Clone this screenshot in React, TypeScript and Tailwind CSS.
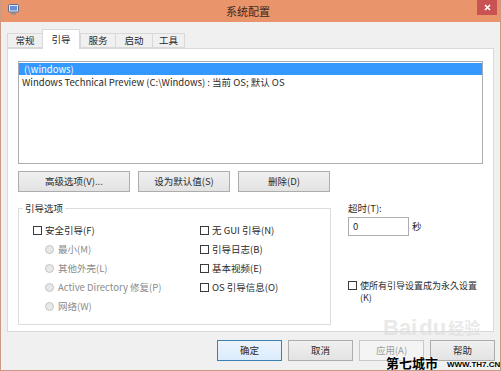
import type { ReactNode } from 'react'

const tabs = [
  { label: '常规', w: 'w-[35px]' },
  { label: '引导', w: 'w-[38px]', active: true },
  { label: '服务', w: 'w-[35px]' },
  { label: '启动', w: 'w-[37px]' },
  { label: '工具', w: 'w-[33px]' },
]

function CheckBox({ children }: { children: ReactNode }) {
  return (
    <div className="flex h-[19px] items-center gap-[3px]">
      <span className="h-[9px] w-[9px] shrink-0 border border-[#3a3a3a] bg-white" />
      <span>{children}</span>
    </div>
  )
}

function Radio({ children }: { children: ReactNode }) {
  return (
    <div className="flex h-[19px] items-center gap-[4px] pl-[12px] text-[#8a8a8a]">
      <span className="h-[9px] w-[9px] shrink-0 rounded-full border border-[#c4c4c4] bg-[#e8e8e8]" />
      <span>{children}</span>
    </div>
  )
}

function Btn({ children, w, variant }: { children: ReactNode; w: string; variant?: 'default' | 'disabled' }) {
  const look =
    variant === 'default'
      ? 'border-[#3c7fb1] bg-gradient-to-b from-[#ecf4fc] to-[#dcecfc]'
      : variant === 'disabled'
        ? 'border-[#c8c8c8] bg-[#f4f4f4] text-[#a0a0a0]'
        : 'border-[#acacac] bg-gradient-to-b from-[#f0f0f0] to-[#e3e3e3]'
  return (
    <div className={`flex h-[21px] ${w} items-center justify-center border ${look}`}>{children}</div>
  )
}

export default function App() {
  return (
    <div className="relative flex h-[371px] w-[501px] flex-col overflow-hidden border-x border-b border-[#c99b84] bg-[#f0f0f0] font-['Noto_Sans_CJK_SC',sans-serif] text-[9.5px] leading-[13px] text-[#2a2a2a]">
      {/* title bar */}
      <div className="flex h-[22px] shrink-0 items-start bg-[#e9946a]">
        <svg className="ml-[7px] mt-[4px]" width="11" height="11" viewBox="0 0 11 11">
          <rect x="0.5" y="0.5" width="10" height="7.5" rx="1" fill="#dfe6f0" stroke="#5f6f8a" />
          <rect x="2" y="2" width="7" height="4.5" fill="#6a8fd6" />
          <rect x="3" y="8.5" width="5" height="2" fill="#8a8fa0" />
        </svg>
        <div className="flex-1 pt-[4px] text-center text-[11px] leading-[14px] text-[#3b2a22]">系统配置</div>
        <div className="mr-[3px] flex h-[15px] w-[20px] items-center justify-center bg-[#c95352]">
          <svg width="7" height="7" viewBox="0 0 7 7">
            <path d="M1 1L6 6M6 1L1 6" stroke="#fff" strokeWidth="1.6" />
          </svg>
        </div>
      </div>

      {/* tabs */}
      <div className="ml-[6px] mt-[7px] flex items-end">
        {tabs.map((t) =>
          t.active ? (
            <div
              key={t.label}
              className={`relative z-10 -mb-px flex h-[20px] ${t.w} justify-center border border-b-0 border-[#d9d9d9] bg-white pt-[3px]`}
            >
              {t.label}
            </div>
          ) : (
            <div
              key={t.label}
              className={`flex h-[15px] ${t.w} items-center justify-center border border-r-0 border-[#d9d9d9] bg-[#f0f0f0] last:border-r`}
            >
              {t.label}
            </div>
          ),
        )}
      </div>

      {/* tab page */}
      <div className="ml-[6px] flex h-[284px] w-[487px] flex-col border border-[#d9d9d9] bg-white pl-[10px] pt-[12px]">
        <div className="h-[103px] w-[465px] border border-[#abadb3] bg-white pt-[1px]">
          <div className="h-[12px] bg-[#3399ff] pl-[5px] leading-[12px] text-white">(\windows)</div>
          <div className="h-[13px] pl-[3px] leading-[15px]">Windows Technical Preview (C:\Windows) : 当前 OS; 默认 OS</div>
        </div>

        <div className="mt-[7px] flex gap-[8px]">
          <Btn w="w-[112px]">高级选项(V)...</Btn>
          <Btn w="w-[92px]">设为默认值(S)</Btn>
          <Btn w="w-[92px]">删除(D)</Btn>
        </div>

        <div className="mt-[9px] flex">
          <div className="pt-[7px]">
            <div className="relative h-[117px] w-[313px] border border-[#dcdcdc] pt-[12px]">
              <span className="absolute -top-[7px] left-[4px] bg-white px-[2px]">引导选项</span>
              <div className="flex">
                <div className="w-[181px] pl-[14px]">
                  <CheckBox>安全引导(F)</CheckBox>
                  <Radio>最小(M)</Radio>
                  <Radio>其他外壳(L)</Radio>
                  <Radio>Active Directory 修复(P)</Radio>
                  <Radio>网络(W)</Radio>
                </div>
                <div>
                  <CheckBox>无 GUI 引导(N)</CheckBox>
                  <CheckBox>引导日志(B)</CheckBox>
                  <CheckBox>基本视频(E)</CheckBox>
                  <CheckBox>OS 引导信息(O)</CheckBox>
                </div>
              </div>
            </div>
          </div>

          <div className="ml-[17px] flex flex-col">
            <div className="h-[14px] leading-[14px]">超时(T):</div>
            <div className="mt-[2px] flex items-center gap-[3px]">
              <div className="h-[19px] w-[61px] border border-[#abadb3] bg-white pl-[4px] leading-[16px]">0</div>
              <span>秒</span>
            </div>
            <div className="mt-[44px] flex items-start gap-[3px]">
              <span className="mt-[1px] h-[9px] w-[9px] shrink-0 border border-[#3a3a3a] bg-white" />
              <span className="flex flex-col text-[9px] leading-[12px]">
                <span className="whitespace-nowrap">使所有引导设置成为永久设置</span>
                <span>(K)</span>
              </span>
            </div>
          </div>
        </div>
      </div>

      {/* dialog buttons */}
      <div className="mt-[8px] flex justify-end gap-[6px] pr-[5px]">
        <Btn w="w-[65px]" variant="default">确定</Btn>
        <Btn w="w-[65px]">取消</Btn>
        <Btn w="w-[65px]" variant="disabled">应用(A)</Btn>
        <Btn w="w-[65px]">帮助</Btn>
      </div>

      {/* watermarks */}
      <div className="pointer-events-none absolute left-[382px] top-[318px] flex items-end gap-[2px] font-['Liberation_Sans',sans-serif] text-[22px] font-bold leading-[19px] text-[#dcdcdc] opacity-60">
        <span>Bai</span>
        <span>du</span>
        <span className="font-['Noto_Sans_CJK_SC',sans-serif] text-[16px]">经验</span>
      </div>
      <div className="pointer-events-none absolute left-[385px] top-[355px] text-[13px] font-bold leading-[16px] text-black [text-shadow:0_0_2px_#fff,0_0_2px_#fff]">
        第七城市
      </div>
      <div className="pointer-events-none absolute left-[446px] top-[360px] font-['Liberation_Sans',sans-serif] text-[8px] font-bold leading-[10px] text-black [text-shadow:0_0_2px_#fff,0_0_2px_#fff]">
        WWW.TH7.CN
      </div>
    </div>
  )
}
